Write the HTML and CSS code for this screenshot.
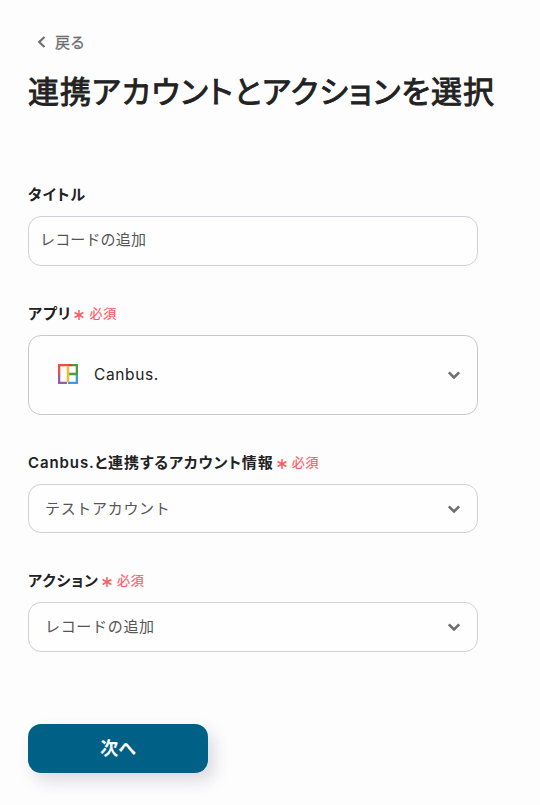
FILE: index.html
```html
<!DOCTYPE html>
<html lang="ja">
<head>
  <meta charset="UTF-8" />
  <title>連携アカウントとアクションを選択</title>
  <link rel="stylesheet" href="styles.css">
</head>
<body>

  <main class="main-content">
    <a class="back-link">
      <svg class="back-icon" width="9" height="12" viewBox="0 0 9 12"><path d="M7.5 1L2.2 6l5.3 5" /></svg>
      <span>戻る</span>
    </a>

    <h1>連携アカウントとアクションを選択</h1>

    <form>
      <div class="field">
        <label class="field-label" for="title">タイトル</label>
        <input class="box text-input" id="title" type="text" value="レコードの追加">
      </div>

      <div class="field">
        <div class="field-label">アプリ
          <span class="required"><svg class="asterisk" width="10" height="10" viewBox="0 0 10 10"><path d="M5 0v10M.6 2.5l8.8 5M.6 7.5l8.8-5" /></svg>必須</span>
        </div>
        <div class="box app-select">
          <svg class="app-icon" width="20" height="20" viewBox="0 0 20 20">
            <path stroke="#e8503f" d="M1 10V1h9" />
            <path stroke="#c94b43" d="M10 1h4" />
            <path stroke="#4c9b45" d="M14 1h5v10M10 10h9" />
            <path stroke="#9c5aa8" d="M1 10v9h8" />
            <path stroke="#3d9de0" d="M19 11v8h-9" />
            <path stroke="#edbc3c" d="M10 2v16" />
          </svg>
          <span class="app-name">Canbus.</span>
          <svg class="chevron" width="14" height="8" viewBox="0 0 14 8"><path d="M1.8 1.3L7 6.5l5.2-5.2" /></svg>
        </div>
      </div>

      <div class="field">
        <div class="field-label">Canbus.と連携するアカウント情報
          <span class="required"><svg class="asterisk" width="10" height="10" viewBox="0 0 10 10"><path d="M5 0v10M.6 2.5l8.8 5M.6 7.5l8.8-5" /></svg>必須</span>
        </div>
        <div class="box account-select">
          <span>テストアカウント</span>
          <svg class="chevron" width="14" height="8" viewBox="0 0 14 8"><path d="M1.8 1.3L7 6.5l5.2-5.2" /></svg>
        </div>
      </div>

      <div class="field">
        <div class="field-label">アクション
          <span class="required"><svg class="asterisk" width="10" height="10" viewBox="0 0 10 10"><path d="M5 0v10M.6 2.5l8.8 5M.6 7.5l8.8-5" /></svg>必須</span>
        </div>
        <div class="box action-select">
          <span>レコードの追加</span>
          <svg class="chevron" width="14" height="8" viewBox="0 0 14 8"><path d="M1.8 1.3L7 6.5l5.2-5.2" /></svg>
        </div>
      </div>

      <button class="next-button" type="button">次へ</button>
    </form>
  </main>

</body>
</html>
```
FILE: styles.css
```css
* {
  box-sizing: border-box;
}

body {
  margin: 0;
  font-family: Inter, "Noto Sans CJK JP", sans-serif;
  font-feature-settings: "palt";
  letter-spacing: 0.04em;
  background-color: #fdfdfe;
  color: #222;
}

.main-content {
  padding: 31px 28px;
}

svg {
  fill: none;
  flex-shrink: 0;
}

.back-link {
  display: flex;
  align-items: center;
  gap: 9px;
  height: 20px;
  padding-left: 9px;
  font-size: 15px;
  color: #6f6f73;
  -webkit-text-stroke: 0.3px;
}

.back-icon {
  margin-top: 2px;
  stroke: #6f6f73;
  stroke-width: 2.2;
}

h1 {
  margin: 17px 0 67px;
  font-size: 31px;
  font-weight: 400;
  letter-spacing: 0.032em;
  line-height: 48px;
  white-space: nowrap;
  -webkit-text-stroke: 0.9px;
}

.field {
  width: 450px;
  margin-bottom: 37px;
}

.field-label {
  display: flex;
  align-items: center;
  gap: 3px;
  height: 20px;
  margin-bottom: 13px;
  font-size: 15px;
  font-weight: 600;
  letter-spacing: 0.06em;
  white-space: nowrap;
}

.field + .field {
  margin-top: -1px;
}

.required {
  display: flex;
  align-items: center;
  gap: 5px;
  font-size: 13px;
  font-weight: 400;
  -webkit-text-stroke: 0.2px;
  color: #ff5a5f;
}

.asterisk {
  margin-top: 5px;
  stroke: #ff5a5f;
  stroke-width: 1.5;
}

.box {
  display: flex;
  align-items: center;
  width: 100%;
  height: 50px;
  padding: 0 16px 2px 16px;
  border: 1px solid #cfd0da;
  border-radius: 13px;
  background-color: #fefefe;
  font-size: 15px;
  font-feature-settings: normal;
  letter-spacing: 0.045em;
  color: #555;
}

.text-input {
  padding: 0 11px 5px;
  font-family: inherit;
  letter-spacing: 0.01em;
}

.app-select {
  height: 80px;
  padding-left: 29px;
  border-color: #c8c8ca;
  font-size: 15.5px;
  letter-spacing: 0.04em;
  color: #222;
}

.app-name {
  margin-left: 16px;
}

.account-select {
  height: 49px;
}

.action-select {
  padding-bottom: 3px;
}

.chevron {
  margin: 2px 0 0 auto;
  stroke: #707074;
  stroke-width: 2.6;
}

.app-icon {
  stroke-width: 2.6;
}

.next-button {
  display: block;
  width: 180px;
  height: 49px;
  margin-top: 72px;
  padding-bottom: 5px;
  border: none;
  border-radius: 13px;
  background-color: #006085;
  box-shadow: 6px 8px 16px rgba(60, 60, 90, 0.18);
  color: #fff;
  font-family: inherit;
  font-feature-settings: inherit;
  font-size: 18px;
  font-weight: 700;
}
```
